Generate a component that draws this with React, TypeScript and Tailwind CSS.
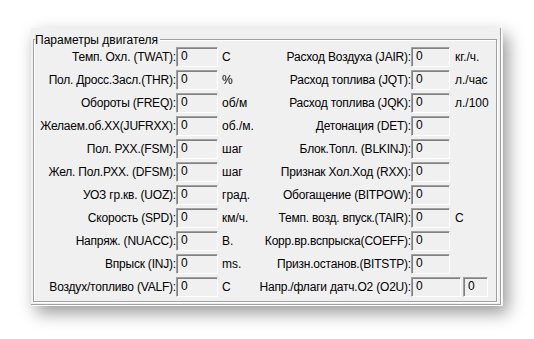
import React from 'react';

const leftRows: [string, string][] = [
  ['Темп. Охл. (TWAT):', 'C'],
  ['Пол. Дросс.Засл.(THR):', '%'],
  ['Обороты (FREQ):', 'об/м'],
  ['Желаем.об.XX(JUFRXX):', 'об./м.'],
  ['Пол. РХХ.(FSM):', 'шаг'],
  ['Жел. Пол.РХХ. (DFSM):', 'шаг'],
  ['УОЗ гр.кв. (UOZ):', 'град.'],
  ['Скорость (SPD):', 'км/ч.'],
  ['Напряж. (NUACC):', 'В.'],
  ['Впрыск (INJ):', 'ms.'],
  ['Воздух/топливо (VALF):', 'C'],
];

const rightRows: [string, string][] = [
  ['Расход Воздуха (JAIR):', 'кг./ч.'],
  ['Расход топлива (JQT):', 'л./час'],
  ['Расход топлива (JQK):', 'л./100'],
  ['Детонация (DET):', ''],
  ['Блок.Топл. (BLKINJ):', ''],
  ['Признак Хол.Ход (RXX):', ''],
  ['Обогащение (BITPOW):', ''],
  ['Темп. возд. впуск.(TAIR):', 'C'],
  ['Корр.вр.вспрыска(COEFF):', ''],
  ['Призн.останов.(BITSTP):', ''],
];

// sunken read-only field
const Field: React.FC<{ className?: string }> = ({ className = '' }) => (
  <div
    className={`h-[20px] border border-t-[#a0a0a0] border-l-[#a0a0a0] border-r-white border-b-white shadow-[inset_1px_1px_0_#808080] pl-[4px] leading-[16px] text-black ${className}`}
  >
    0
  </div>
);

const Label: React.FC<{ text: string }> = ({ text }) => (
  <div className="flex justify-end items-center whitespace-nowrap h-[23px] tracking-[-0.2px]">{text}</div>
);

export default function App() {
  return (
    <div className="w-[534px] h-[339px] bg-white overflow-hidden pt-[28px] pl-[31px] font-['Liberation_Sans',Arial,sans-serif] text-[12px] text-black">
      {/* window panel */}
      <div className="w-[472px] h-[278px] bg-[#f0f0f0] shadow-[5px_7px_16px_rgba(0,0,0,0.4)]">
        <div className="w-[470px] h-[277px] border-r border-b border-[#a0a0a0] shadow-[1px_1px_0_#fff] pl-[2px] pt-[11px]">
          {/* group box */}
          <div className="relative w-[464px] h-[263px] border border-[#a0a0a0] shadow-[inset_1px_1px_0_#fff,1px_1px_0_#fff]">
            <div className="absolute -top-[8px] left-[1px] bg-[#f0f0f0] pr-[2px] leading-[16px]">
              Параметры двигателя
            </div>

            <div className="flex pt-[5px]">
              {/* left column */}
              <div className="grid grid-cols-[142px_42px_37px] items-center">
                {leftRows.map(([label, unit]) => (
                  <React.Fragment key={label}>
                    <Label text={label} />
                    <Field />
                    <div className="pl-[4px] whitespace-nowrap">{unit}</div>
                  </React.Fragment>
                ))}
              </div>

              {/* right column */}
              <div className="grid grid-cols-[156px_39px_auto] items-center">
                {rightRows.map(([label, unit]) => (
                  <React.Fragment key={label}>
                    <Label text={label} />
                    <Field />
                    <div className="pl-[5px] whitespace-nowrap">{unit}</div>
                  </React.Fragment>
                ))}
                <Label text="Напр./флаги датч.O2 (O2U):" />
                <Field className="w-[50px]" />
                <div className="flex pl-[13px]">
                  <Field className="w-[25px]" />
                </div>
              </div>
            </div>
          </div>
        </div>
      </div>
    </div>
  );
}
